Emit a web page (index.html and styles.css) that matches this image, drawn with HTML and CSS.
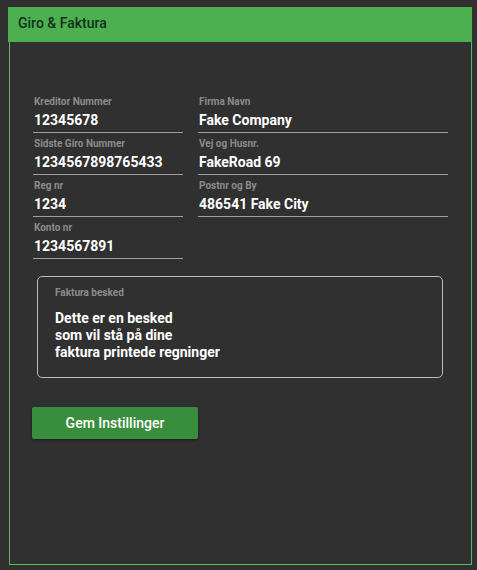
FILE: index.html
```html
<!DOCTYPE html>
<html>
<head>
<meta charset="utf-8">
<link rel="stylesheet" href="styles.css">
</head>
<body>
<div class="panel">
  <div class="header">Giro &amp; Faktura</div>
  <div class="body">
    <div class="grid">
      <div class="col">
        <div class="field"><div class="label">Kreditor Nummer</div><div class="value">12345678</div></div>
        <div class="field"><div class="label">Sidste Giro Nummer</div><div class="value">1234567898765433</div></div>
        <div class="field"><div class="label">Reg nr</div><div class="value">1234</div></div>
        <div class="field"><div class="label">Konto nr</div><div class="value">1234567891</div></div>
      </div>
      <div class="col col-wide">
        <div class="field"><div class="label">Firma Navn</div><div class="value">Fake Company</div></div>
        <div class="field"><div class="label">Vej og Husnr.</div><div class="value">FakeRoad 69</div></div>
        <div class="field"><div class="label">Postnr og By</div><div class="value">486541 Fake City</div></div>
      </div>
    </div>
    <div class="message">
      <div class="label">Faktura besked</div>
      <div class="msg-text">Dette er en besked<br>som vil stå på dine<br>faktura printede regninger</div>
    </div>
    <button class="btn">Gem Instillinger</button>
  </div>
</div>
</body>
</html>
```
FILE: styles.css
```css
html, body {
  margin: 0;
  padding: 0;
  background: #303030;
  font-family: Roboto, "Liberation Sans", sans-serif;
}
body {
  padding: 7px 5px 5px 8px;
}
.panel {
  width: 464px;
  display: flex;
  flex-direction: column;
}
.header {
  background: #4caf50;
  color: #14301a;
  font-size: 14px;
  font-weight: 500;
  height: 35px;
  line-height: 33px;
  padding-left: 10px;
  box-sizing: border-box;
}
.body {
  margin: 0 0 0 1px;
  border: 1px solid #5cb85f;
  border-top: none;
  height: 523px;
  box-sizing: border-box;
  padding: 54px 0 0 23px;
}
.grid {
  display: flex;
  gap: 15px;
}
.col {
  width: 150px;
  display: flex;
  flex-direction: column;
}
.col-wide {
  width: 250px;
}
.field {
  height: 37px;
  margin-bottom: 5px;
  box-sizing: border-box;
  border-bottom: 1px solid #a0a0a0;
  padding-left: 1px;
}
.label {
  font-size: 10px;
  font-weight: 700;
  color: #8c8c8c;
  height: 12px;
  line-height: 12px;
}
.value {
  font-size: 14px;
  font-weight: 700;
  color: #ffffff;
  line-height: 18px;
  margin-top: 3px;
}
.message {
  margin: 12px 0 0 4px;
  width: 406px;
  height: 102px;
  box-sizing: border-box;
  border: 1px solid #bdbdbd;
  border-radius: 5px;
  padding: 10px 0 0 17px;
}
.msg-text {
  margin-top: 11px;
  font-size: 14px;
  font-weight: 700;
  color: #ffffff;
  line-height: 17px;
}
.btn {
  display: block;
  margin-top: 29px;
  margin-left: -1px;
  width: 166px;
  height: 32px;
  border: none;
  border-radius: 2px;
  background: #388e3c;
  color: #ffffff;
  font-family: Roboto, "Liberation Sans", sans-serif;
  font-size: 14px;
  font-weight: 500;
  box-shadow: 0 1px 3px rgba(0,0,0,0.5);
  padding: 0;
}
```
